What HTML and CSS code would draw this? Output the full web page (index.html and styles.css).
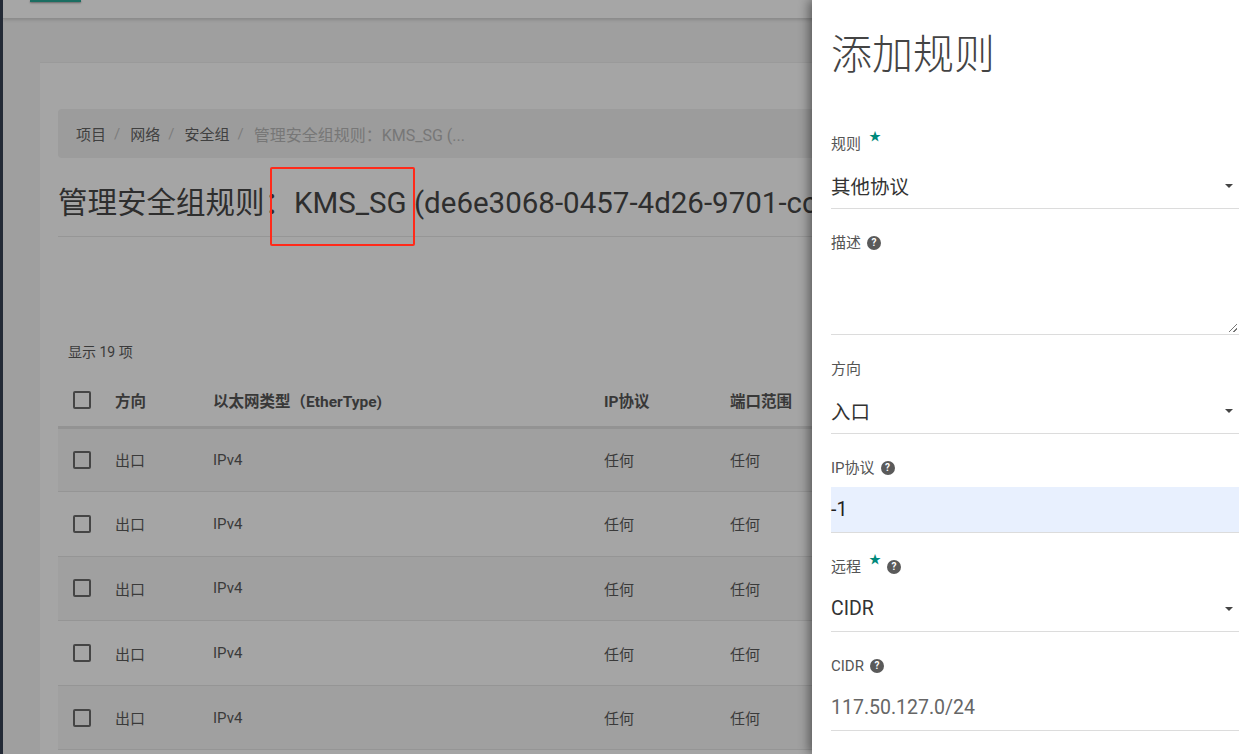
FILE: index.html
```html
<!DOCTYPE html>
<html lang="zh">
<head>
<meta charset="utf-8">
<title>管理安全组规则</title>
<link rel="stylesheet" href="styles.css">
</head>
<body>
<div class="app">
  <div class="side-edge"></div>
  <div class="main">
    <div class="topbar"><div class="top-btn"></div></div>
    <div class="card">
      <div class="breadcrumb">
        <span class="crumb">项目</span><span class="sep">/</span>
        <span class="crumb">网络</span><span class="sep">/</span>
        <span class="crumb">安全组</span><span class="sep">/</span>
        <span class="crumb current">管理安全组规则：KMS_SG (...</span>
      </div>
      <h1 class="page-title">管理安全组规则：KMS_SG (de6e3068-0457-4d26-9701-cc5e1b2f8a40)</h1>
      <div class="count">显示 19 项</div>
      <table class="rules">
        <thead>
          <tr>
            <th class="c-check"><span class="box"></span></th>
            <th class="c-dir">方向</th>
            <th class="c-eth">以太网类型（EtherType)</th>
            <th class="c-ip">IP协议</th>
            <th class="c-port">端口范围</th>
            <th>远端IP前缀</th>
          </tr>
        </thead>
        <tbody>
          <tr><td class="c-check"><span class="box"></span></td><td>出口</td><td>IPv4</td><td>任何</td><td>任何</td><td>0.0.0.0/0</td></tr>
          <tr><td class="c-check"><span class="box"></span></td><td>出口</td><td>IPv4</td><td>任何</td><td>任何</td><td>0.0.0.0/0</td></tr>
          <tr><td class="c-check"><span class="box"></span></td><td>出口</td><td>IPv4</td><td>任何</td><td>任何</td><td>0.0.0.0/0</td></tr>
          <tr><td class="c-check"><span class="box"></span></td><td>出口</td><td>IPv4</td><td>任何</td><td>任何</td><td>0.0.0.0/0</td></tr>
          <tr><td class="c-check"><span class="box"></span></td><td>出口</td><td>IPv4</td><td>任何</td><td>任何</td><td>0.0.0.0/0</td></tr>
        </tbody>
      </table>
    </div>
  </div>
</div>

<div class="highlight"></div>

<aside class="panel">
  <h2 class="panel-title">添加规则</h2>

  <div class="field">
    <div class="label"><span>规则</span><span class="star">★</span></div>
    <div class="select"><span>其他协议</span><span class="caret"></span></div>
  </div>

  <div class="field">
    <div class="label"><span>描述</span><span class="help">?</span></div>
    <div class="textarea"><span class="grip"></span></div>
  </div>

  <div class="field">
    <div class="label"><span>方向</span></div>
    <div class="select"><span>入口</span><span class="caret"></span></div>
  </div>

  <div class="field">
    <div class="label"><span>IP协议</span><span class="help">?</span></div>
    <div class="input autofill">-1</div>
  </div>

  <div class="field">
    <div class="label"><span>远程</span><span class="star">★</span><span class="help">?</span></div>
    <div class="select"><span>CIDR</span><span class="caret"></span></div>
  </div>

  <div class="field">
    <div class="label"><span>CIDR</span><span class="help">?</span></div>
    <div class="input muted">117.50.127.0/24</div>
  </div>
</aside>
</body>
</html>
```

FILE: styles.css
```css
* { box-sizing: border-box; }
html, body { margin: 0; height: 100%; }
body {
  background: #9f9f9f;
  overflow: hidden;
  font-family: Roboto, "Noto Sans CJK SC", sans-serif;
  color: #333;
}
.app { display: flex; height: 100vh; }
.side-edge { width: 3px; background: #232a36; flex: none; }
.main { flex: 1; min-width: 0; overflow: hidden; }
.topbar {
  height: 19px;
  background: #a6a6a6;
  border-bottom: 1px solid #8c8c8c;
  box-shadow: 0 1px 3px rgba(0,0,0,0.15);
  padding-left: 27px;
}
.top-btn {
  width: 51px; height: 2px;
  background: #1b6e62;
  box-shadow: 0 1px 2px rgba(0,0,0,0.4);
}
.card {
  margin: 43px 0 0 37px;
  width: 1180px;
  height: 800px;
  background: #a5a5a5;
  border-top: 1px solid #9a9a9a;
  padding: 46px 18px 0 18px;
}
.breadcrumb {
  height: 49px;
  background: #9c9c9c;
  border-radius: 4px;
  display: flex;
  align-items: center;
  padding-left: 18px;
  font-size: 15px;
  color: #404040;
}
.sep { color: #7c7c7c; margin: 0 10px 0 8px; }
.crumb.current { color: #777; font-size: 16px; }
.page-title {
  margin: 0;
  padding: 26px 0 14px;
  font-size: 29.5px;
  font-weight: 400;
  line-height: 38px;
  white-space: nowrap;
  color: #2e2e2e;
  border-bottom: 1px solid #969696;
}
.count {
  margin-top: 104px;
  padding-left: 10px;
  font-size: 14px;
  color: #3a3a3a;
  height: 22px;
  line-height: 22px;
}
.rules {
  margin-top: 12px;
  border-collapse: collapse;
  width: 1140px;
  font-size: 15px;
}
.rules th {
  text-align: left;
  font-weight: 700;
  font-size: 15.5px;
  color: #383838;
  height: 52px;
  border-bottom: 3px solid #939393;
  padding: 0;
}
.rules td {
  height: 64.6px;
  padding: 0;
  border-bottom: 1px solid #959595;
  color: #3a3a3a;
}
.rules tbody tr:nth-child(odd) td { background: #a0a0a0; }
.c-check { width: 57px; padding-left: 15px !important; }
.rules th:nth-child(2) { width: 98px; }
.rules th:nth-child(3) { width: 391px; }
.rules th:nth-child(4) { width: 126px; }
.rules th:nth-child(5) { width: 180px; }
.box {
  display: block;
  width: 18px; height: 18px;
  border: 2px solid #454545;
  border-radius: 2px;
}
.highlight {
  position: absolute;
  left: 270px; top: 167px;
  width: 145px; height: 79px;
  border: 2px solid #ff2a1a;
  border-radius: 2px;
}
.panel {
  position: absolute;
  top: 0; left: 812px;
  width: 446px; height: 100%;
  background: #fff;
  box-shadow: -3px 0 10px rgba(0,0,0,0.45);
  padding: 0 19px;
}
.panel-title {
  margin: 0;
  padding-top: 30px;
  height: 134px;
  font-size: 41px;
  font-weight: 300;
  line-height: 50px;
  color: #444;
}
.field { margin-bottom: 24px; }
.label {
  font-size: 15px;
  color: #555;
  height: 20px;
  line-height: 20px;
  display: flex;
  align-items: center;
}
.star {
  color: #00897b;
  font-size: 12px;
  align-self: flex-start;
  margin: -3px 2px 0 8px;
  line-height: 12px;
}
.help {
  display: inline-flex;
  align-items: center;
  justify-content: center;
  width: 14px; height: 14px;
  margin-left: 6px;
  border-radius: 50%;
  background: #5a5a5a;
  color: #fff;
  font-size: 10px;
  font-weight: 700;
  line-height: 1;
}
.star + .help { margin-left: 4px; }
.select, .input {
  margin-top: 9px;
  height: 46px;
  border-bottom: 1px solid #dcdcdc;
  display: flex;
  align-items: center;
  justify-content: space-between;
  font-size: 19.5px;
  color: #333;
}
.caret {
  width: 0; height: 0;
  border-left: 4px solid transparent;
  border-right: 4px solid transparent;
  border-top: 4px solid #444;
  margin-right: 6px;
}
.textarea {
  margin-top: 2px;
  height: 80px;
  border-bottom: 1px solid #dcdcdc;
  position: relative;
}
.grip {
  position: absolute;
  right: 2px; bottom: 2px;
  width: 8px; height: 8px;
  background: linear-gradient(135deg, transparent 45%, #777 45%, #777 55%, transparent 55%, transparent 75%, #777 75%, #777 85%, transparent 85%);
}
.input.autofill { background: #e8f0fe; color: #222; }
.input.muted { color: #666; }
```
